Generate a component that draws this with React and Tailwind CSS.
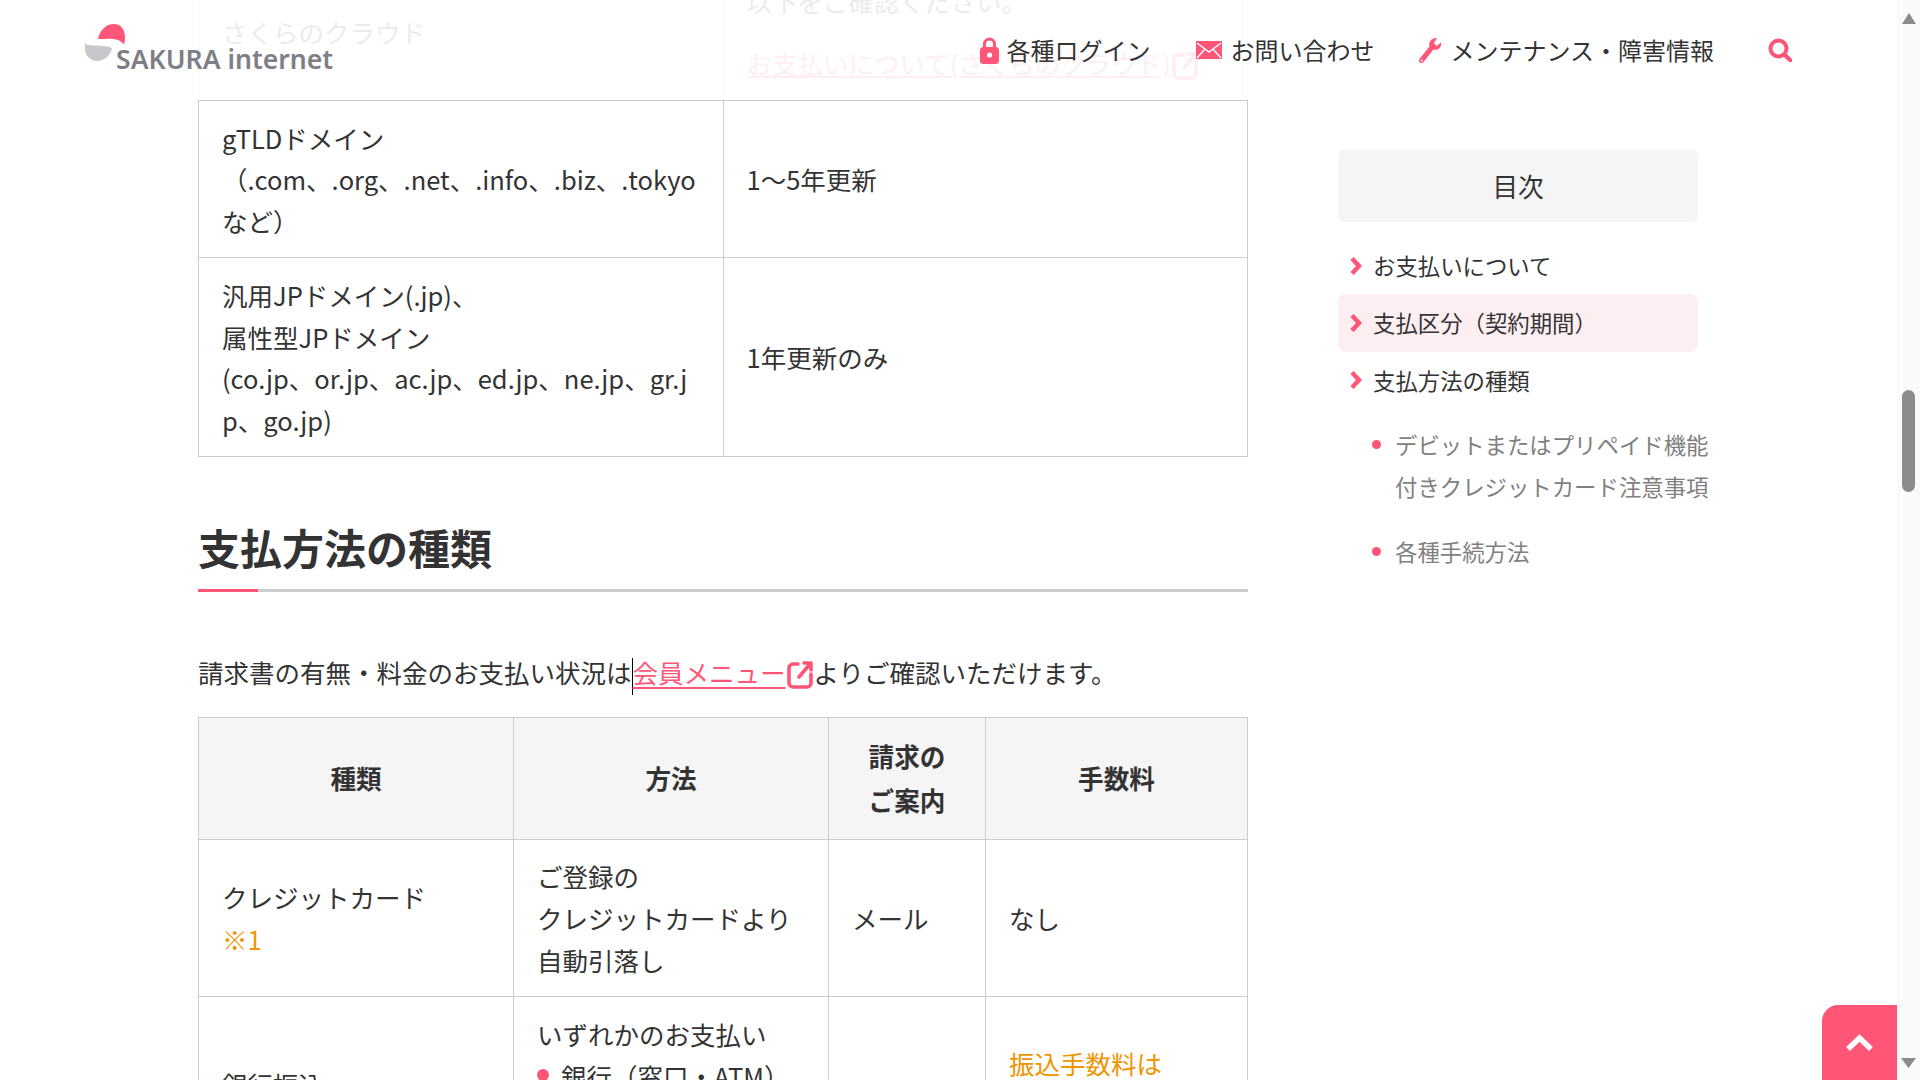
import React from 'react';

const font = { fontFamily: '"Noto Sans CJK JP", "Noto Sans", sans-serif' };

function LinkIcon() {
    return (
        <svg className="inline-block align-[-6px] ml-[1px]" width="27" height="29" viewBox="0 0 27 29" fill="none" stroke="#ff5576" strokeWidth="3.600" strokeLinecap="round" strokeLinejoin="round">
            <path d="M11 4H6a4 4 0 0 0-4 4v15a4 4 0 0 0 4 4h14a4 4 0 0 0 4-4v-9" />
            <path d="M12 17 23 4M17 3h7v7" />
        </svg>
    );
}

function Logo() {
    return (
        <div className="flex items-start">
            <svg className="mt-[23px] shrink-0" width="42" height="40" viewBox="0 0 42 40">
                <path d="M13 16C15 7 21 1 29 1c7 0 11 6 11 13 0 3-.3 5-1 7-1 0-3-3-6-4-5-2-13-1-20-1Z" fill="#ff5576" />
                <path d="M0 19c1 2 1 3 3 3 7 1 17 0 24 3-1 7-8 13-15 13C5 38 0 32 0 26Z" fill="#c8c8cc" />
            </svg>
            <span className="text-[26.6px] font-semibold leading-[30px] mt-[44px] -ml-[11px] text-[#7e7e86] whitespace-nowrap" style={{ fontFamily: '"Noto Sans", sans-serif' }}>SAKURA internet</span>
        </div>
    );
}

function Header() {
    return (
        <header className="absolute top-0 left-0 right-[23px] h-[100px] bg-white/90 flex justify-between pl-[85px] pr-[105px]">
            <Logo />
            <nav className="flex items-center h-[100px] text-[24px] text-[#333] leading-none">
                <a className="flex items-center gap-[7px]">
                    <svg width="19" height="27" viewBox="0 0 19 27" fill="none">
                        <path d="M4.500 12V7a5 5 0 0 1 10 0v5" stroke="#ff5576" strokeWidth="3" />
                        <rect x="0" y="10" width="19" height="17" rx="3.500" fill="#ff5576" />
                        <circle cx="9.500" cy="18" r="2.600" fill="#fff" />
                    </svg>
                    各種ログイン
                </a>
                <a className="flex items-center gap-2 ml-[46px]">
                    <svg width="26" height="18" viewBox="0 0 26 18" fill="none">
                        <rect width="26" height="18" fill="#ff5576" />
                        <path d="M1 2 13 11 25 2M1 17l8-9M25 17l-8-9" stroke="#fff" strokeWidth="1.400" />
                    </svg>
                    お問い合わせ
                </a>
                <a className="flex items-center gap-2 ml-[44px]">
                    <svg width="24" height="27" viewBox="0 0 24 27">
                        <path d="M19 1 16 6l2.500 3L23 5.500C24 10 20 14 15.500 12.500L5.500 25C4 27 0 26 1 22.500L11.500 9.500C10 5 14 .5 19 1Z" fill="#ff5576" />
                        <circle cx="3.600" cy="23.500" r="1.100" fill="#fff" />
                    </svg>
                    メンテナンス・障害情報
                </a>
                <svg className="ml-[54px]" width="24" height="24" viewBox="0 0 24 24" fill="none" stroke="#ff5576" strokeWidth="4">
                    <circle cx="10.500" cy="10.500" r="8" />
                    <path d="m16 16 6.500 6.500" strokeLinecap="round" />
                </svg>
            </nav>
        </header>
    );
}

function Chevron() {
    return (
        <svg className="shrink-0" width="12" height="18" viewBox="0 0 12 18" fill="none" stroke="#ff5576" strokeWidth="4.500">
            <path d="m2 1.500 7 7.500-7 7.500" />
        </svg>
    );
}

function Sidebar() {
    const items = ['お支払いについて', '支払区分（契約期間）', '支払方法の種類'];
    return (
        <aside className="w-[360px] mt-[150px] shrink-0 text-[22.4px] text-[#333]">
            <div className="h-[72px] bg-[#f5f5f5] rounded-md flex items-center justify-center text-[25.6px]">目次</div>
            <ul className="mt-[15px]">
                {items.map((item, i) => (
                    <li key={i} className={'h-[57.4px] flex items-center gap-[11px] pl-3 rounded-lg ' + (i === 1 ? 'bg-[#fdeef1]' : '')}>
                        <Chevron />
                        {item}
                    </li>
                ))}
            </ul>
            <ul className="mt-[15px] text-[#808080] leading-[41.6px] whitespace-nowrap">
                <li className="flex mb-[24px]">
                    <span className="w-[9px] h-[9px] rounded-full bg-[#ff5576] mt-4 ml-[34px] mr-[14px] shrink-0"></span>
                    <span>デビットまたはプリペイド機能<br />付きクレジットカード注意事項</span>
                </li>
                <li className="flex">
                    <span className="w-[9px] h-[9px] rounded-full bg-[#ff5576] mt-4 ml-[34px] mr-[14px] shrink-0"></span>
                    <span>各種手続方法</span>
                </li>
            </ul>
        </aside>
    );
}

function Content() {
    const cell = 'border border-[#ccc] px-[23px] pt-[15.5px] pb-[15.5px] align-middle';
    const first = 'border border-[#ccc] px-[23px] pt-[14px] pb-[17px] align-middle';
    const td = 'border border-[#ccc] px-[23px] py-[15.5px] align-middle';
    const th = 'border border-[#ccc] px-[23px] py-[15.5px] bg-[#f5f5f5] font-bold text-center text-[25.6px] leading-[44.8px]';
    return (
        <main className="w-[1050px] -mt-[35.2px] shrink-0 text-[25.5px] leading-[41.7px] text-[#333]">
            <table className="w-full table-fixed border-collapse">
                <tbody>
                    <tr>
                        <td className={first}>さくらのクラウド</td>
                        <td className={first}>
                            <p className="mb-[20px]">以下をご確認ください。</p>
                            <a className="text-[#ff5576] underline">お支払いについて(さくらのクラウド)<LinkIcon /></a>
                        </td>
                    </tr>
                    <tr>
                        <td className={cell}>gTLDドメイン<br />（.com、.org、.net、.info、.biz、.tokyoなど）</td>
                        <td className={cell}>1～5年更新</td>
                    </tr>
                    <tr>
                        <td className={cell + ' break-all'}>汎用JPドメイン(.jp)、<br />属性型JPドメイン<br />(co.jp、or.jp、ac.jp、ed.jp、ne.jp、gr.jp、go.jp)</td>
                        <td className={cell}>1年更新のみ</td>
                    </tr>
                </tbody>
            </table>

            <h2 className="mt-[59px] text-[42px] leading-[62px] font-bold">支払方法の種類</h2>
            <div className="flex h-[3px] mt-[11px]">
                <div className="w-[60px] bg-[#ff5576]"></div>
                <div className="flex-1 bg-[#ccc]"></div>
            </div>

            <p className="mt-[59px] whitespace-nowrap">
                請求書の有無・料金のお支払い状況は<span className="inline-block w-0 h-[37px] border-l border-black align-middle"></span><a className="text-[#ff5576] underline decoration-2 underline-offset-[4px]">会員メニュー<LinkIcon /></a>よりご確認いただけます。
            </p>

            <table className="w-[1049px] table-fixed border-collapse mt-[22.400px]">
                <colgroup>
                    <col className="w-[315px]" />
                    <col className="w-[315px]" />
                    <col className="w-[157px]" />
                    <col className="w-[262px]" />
                </colgroup>
                <thead>
                    <tr>
                        <th className={th}>種類</th>
                        <th className={th}>方法</th>
                        <th className={th}>請求の<br />ご案内</th>
                        <th className={th}>手数料</th>
                    </tr>
                </thead>
                <tbody>
                    <tr>
                        <td className={td}>クレジットカード<br /><span className="text-[#ef9400]">※1</span></td>
                        <td className={td}>ご登録の<br />クレジットカードより<br />自動引落し</td>
                        <td className={td}>メール</td>
                        <td className={td}>なし</td>
                    </tr>
                    <tr className="h-[176px]">
                        <td className={td}>銀行振込</td>
                        <td className={td + ' !align-top !pt-[16px]'}>
                            いずれかのお支払い
                            <div className="flex items-center gap-[12px]">
                                <span className="w-3 h-3 rounded-full bg-[#ff5576] shrink-0"></span>
                                銀行（窓口・ATM）
                            </div>
                        </td>
                        <td className={td}></td>
                        <td className={td + ' !align-top !pt-[45px]'}><span className="text-[#ef9400]">振込手数料は</span></td>
                    </tr>
                </tbody>
            </table>
        </main>
    );
}

function Scrollbar() {
    return (
        <div className="w-[23px] shrink-0 h-screen bg-[#fafafa] flex flex-col items-center justify-between pt-[13px] pb-[12px]">
            <svg width="14" height="11" viewBox="0 0 14 11"><path d="M7 0 14 11H0Z" fill="#8b8b8b" /></svg>
            <div className="w-[13px] h-[102px] rounded-full bg-[#8b8b8b] mb-[473px] mt-[273px]"></div>
            <svg width="15" height="10" viewBox="0 0 15 10"><path d="M0 0H15L7.500 10Z" fill="#8b8b8b" /></svg>
        </div>
    );
}

export default function App() {
    return (
        <div className="relative w-full h-screen overflow-hidden bg-white flex" style={font}>
            <div className="flex-1 min-w-0 h-screen flex pl-[198px] gap-[90px]">
                <Content />
                <Sidebar />
            </div>
            <Scrollbar />
            <Header />
            <button className="absolute right-[23px] top-[1005px] w-[75px] h-[75px] bg-[#ff5576] rounded-tl-2xl flex items-start justify-center pt-[29px]">
                <svg width="27" height="17" viewBox="0 0 27 17" fill="none" stroke="#fff" strokeWidth="5.500">
                    <path d="m2 15 11.500-11L25 15" />
                </svg>
            </button>
        </div>
    );
}
